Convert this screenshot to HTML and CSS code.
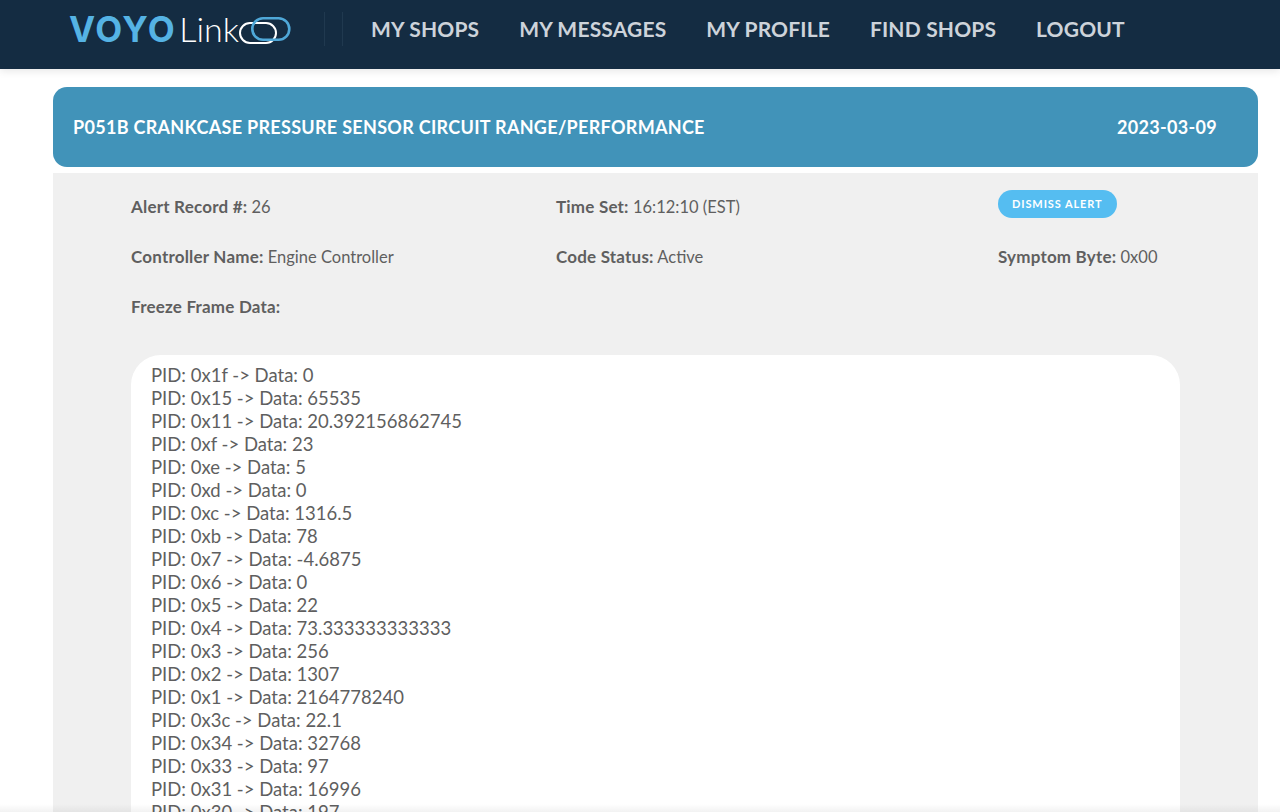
FILE: index.html
```html
<!DOCTYPE html>
<html lang="en">
<head>
<meta charset="utf-8">
<title>VOYOLink</title>
<link rel="stylesheet" href="styles.css">
</head>
<body>
<header class="topbar">
  <a class="logo" href="#">
    <span class="logo-voyo">VOYO</span><span class="logo-link">Link</span>
    <svg class="logo-rings" width="52" height="30" viewBox="0 0 52 30">
      <rect x="1" y="6" width="36" height="20" rx="10" fill="none" stroke="#fff" stroke-width="2"/>
      <rect x="13.3" y="1.3" width="37" height="21.4" rx="10.7" fill="none" stroke="#4fa8d8" stroke-width="2.6"/>
    </svg>
  </a>
  <div class="divider"></div>
  <nav class="nav">
    <a href="#">MY SHOPS</a>
    <a href="#">MY MESSAGES</a>
    <a href="#">MY PROFILE</a>
    <a href="#">FIND SHOPS</a>
    <a href="#">LOGOUT</a>
  </nav>
</header>
<main class="main">
  <section class="banner">
    <h1 class="banner-title">P051B CRANKCASE PRESSURE SENSOR CIRCUIT RANGE/PERFORMANCE</h1>
    <span class="banner-date">2023-03-09</span>
  </section>
  <section class="panel">
    <div class="info-grid">
      <div class="cell"><b>Alert Record #:</b> 26</div>
      <div class="cell"><b>Time Set:</b> 16:12:10 (EST)</div>
      <div class="cell cell-btn"><a class="btn" href="#">DISMISS ALERT</a></div>
      <div class="cell"><b>Controller Name:</b> Engine Controller</div>
      <div class="cell"><b>Code Status:</b> Active</div>
      <div class="cell"><b>Symptom Byte:</b> 0x00</div>
      <div class="cell"><b>Freeze Frame Data:</b></div>
    </div>
    <div class="data-box">
      <div>PID: 0x1f -&gt; Data: 0</div>
      <div>PID: 0x15 -&gt; Data: 65535</div>
      <div>PID: 0x11 -&gt; Data: 20.392156862745</div>
      <div>PID: 0xf -&gt; Data: 23</div>
      <div>PID: 0xe -&gt; Data: 5</div>
      <div>PID: 0xd -&gt; Data: 0</div>
      <div>PID: 0xc -&gt; Data: 1316.5</div>
      <div>PID: 0xb -&gt; Data: 78</div>
      <div>PID: 0x7 -&gt; Data: -4.6875</div>
      <div>PID: 0x6 -&gt; Data: 0</div>
      <div>PID: 0x5 -&gt; Data: 22</div>
      <div>PID: 0x4 -&gt; Data: 73.333333333333</div>
      <div>PID: 0x3 -&gt; Data: 256</div>
      <div>PID: 0x2 -&gt; Data: 1307</div>
      <div>PID: 0x1 -&gt; Data: 2164778240</div>
      <div>PID: 0x3c -&gt; Data: 22.1</div>
      <div>PID: 0x34 -&gt; Data: 32768</div>
      <div>PID: 0x33 -&gt; Data: 97</div>
      <div>PID: 0x31 -&gt; Data: 16996</div>
      <div>PID: 0x30 -&gt; Data: 197</div>
    </div>
  </section>
</main>
<div class="bottom-fade"></div>
</body>
</html>
```

FILE: styles.css
```css
* { box-sizing: border-box; }
html, body { margin: 0; height: 812px; overflow: hidden; background: #fff; }
body { font-family: "Lato", "Open Sans", sans-serif; color: #5f5f5f; }
a { text-decoration: none; color: inherit; }

.topbar {
  height: 69px;
  background: #142c42;
  display: flex;
  align-items: center;
  padding-left: 69px;
  box-shadow: 0 2px 8px rgba(0,0,0,.10);
}
.logo { display: flex; align-items: center; width: 255px; height: 60px; flex: none; margin-top: -12px; }
.logo-voyo { font: 700 35px "Inter", sans-serif; color: #55b3e4; letter-spacing: 1.5px; }
.logo-link { font: 300 34px "Lato", sans-serif; color: #fff; margin-left: 3px; }
.logo-rings { margin-left: 0; margin-top: 6px; flex: none; }
.divider { width: 19px; height: 34px; border-left: 1px solid #20394f; border-right: 1px solid #20394f; flex: none; margin-top: -12px; }
.nav { display: flex; gap: 39.8px; margin-left: 28px; margin-top: -12px; }
.nav a { font: 700 21px "Lato", sans-serif; letter-spacing: .18px; color: #cdd3da; white-space: nowrap; }

.main { padding: 18px 22px 0 53px; }
.banner {
  height: 80px;
  background: #4193b9;
  border-radius: 14px;
  display: flex;
  align-items: center;
  justify-content: space-between;
  padding: 0 41px 0 20px;
  color: #fff;
}
.banner-title { margin: 0 0 1px; font: 700 18px "Lato", sans-serif; letter-spacing: .3px; }
.banner-date { font: 700 18px "Lato", sans-serif; letter-spacing: .3px; margin-bottom: 1px; }
.panel { margin-top: 6px; background: #f0f0f0; padding: 9px 78px 0; height: 700px; }
.info-grid {
  display: grid;
  grid-template-columns: 425px 442px 1fr;
  grid-auto-rows: 50px;
  font-size: 16.5px;
  margin-bottom: 23px;
}
.cell { line-height: 50px; white-space: nowrap; }
.cell b { font-weight: 700; font-size: 17px; letter-spacing: .2px; }
.cell-btn { line-height: 1; }
.btn {
  display: inline-block;
  margin-top: 8px;
  height: 28px;
  line-height: 28px;
  padding: 0 14px;
  border-radius: 14px;
  background: #55bdf1;
  color: #fff;
  font-weight: 700;
  font-size: 11px;
  letter-spacing: .9px;
}
.data-box {
  background: #fff;
  border-radius: 30px;
  padding: 9px 20px;
  width: 1049px;
  font-size: 18.5px;
  line-height: 23px;
  height: 600px;
}
.bottom-fade {
  position: absolute;
  left: 0; right: 0; top: 804px; height: 8px;
  background: linear-gradient(to bottom, rgba(0,0,0,0), rgba(0,0,0,.05));
}
```
